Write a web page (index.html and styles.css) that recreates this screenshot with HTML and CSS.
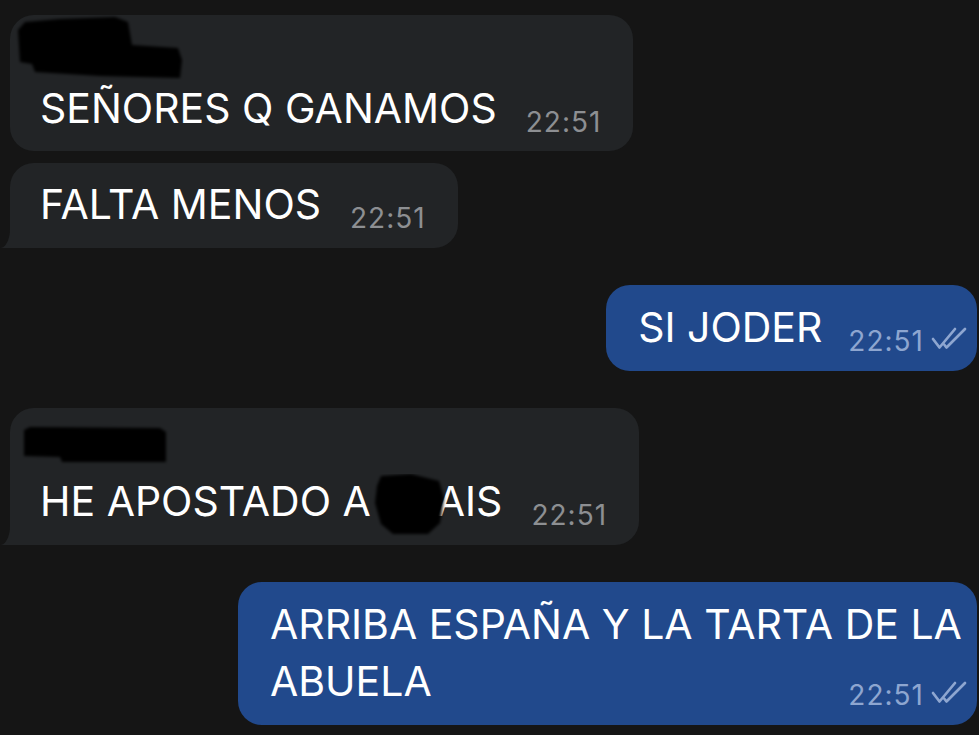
FILE: index.html
```html
<!DOCTYPE html>
<html lang="es">
<head>
    <meta charset="UTF-8">
    <meta name="viewport" content="width=device-width, initial-scale=1.0">
    <title>Chat</title>
    <link rel="stylesheet" href="styles.css">
</head>
<body>
    <svg class="defs" width="0" height="0">
        <filter id="smear" x="-20%" y="-20%" width="140%" height="140%">
            <feGaussianBlur stdDeviation="1.6"/>
        </filter>
    </svg>

    <div class="chat">
        <div class="msg in first top">
            <div class="bubble">
                <div class="sender s1">
                    <svg width="170" height="65" viewBox="0 0 170 65">
                        <polygon filter="url(#smear)" fill="#000" points="4,15 11,7 46,4 101,2 114,7 118,30 164,33 168,45 166,63 86,61 21,57 18,49 6,47"/>
                    </svg>
                </div>
                SEÑORES Q GANAMOS<span class="meta"><span class="time">22:51</span></span>
            </div>
        </div>

        <div class="msg in tail">
            <div class="bubble">
                FALTA MENOS<span class="meta"><span class="time">22:51</span></span>
            </div>
        </div>

        <div class="msg out">
            <div class="bubble">
                SI JODER<span class="meta"><span class="time">22:51</span>
                    <svg class="checks" width="38" height="25" viewBox="0 0 38 25">
                        <path d="M3 13 L9.5 21.5 L25 3 M14.5 19 L16.5 21.5 L35 3"/>
                    </svg>
                </span>
            </div>
        </div>

        <div class="msg in first tail">
            <div class="bubble">
                <div class="sender s2">
                    <svg width="154" height="46" viewBox="0 0 154 46">
                        <polygon filter="url(#smear)" fill="#000" points="6,8 12,5 142,6 148,10 148,40 44,40 42,35 6,34"/>
                    </svg>
                </div>
                HE APOSTADO A<span class="hole"><svg width="78" height="64" viewBox="0 0 78 64">
                    <polygon filter="url(#smear)" fill="#000" points="10,2 40,0 68,7 73,24 69,49 57,60 22,60 10,50 4,29 6,12"/>
                </svg></span>AIS<span class="meta"><span class="time">22:51</span></span>
            </div>
        </div>

        <div class="msg out">
            <div class="bubble wide">
                ARRIBA ESPAÑA Y LA TARTA DE LA ABUELA<span class="meta"><span class="time">22:51</span>
                    <svg class="checks" width="38" height="25" viewBox="0 0 38 25">
                        <path d="M3 13 L9.5 21.5 L25 3 M14.5 19 L16.5 21.5 L35 3"/>
                    </svg>
                </span>
            </div>
        </div>
    </div>
</body>
</html>
```

FILE: styles.css
```css
* {
    margin: 0;
    padding: 0;
    box-sizing: border-box;
}
body {
    background: #151515;
    font-family: Inter, "Noto Sans", sans-serif;
    color: #fff;
    overflow: hidden;
}
.defs {
    position: absolute;
}
.chat {
    display: flex;
    flex-direction: column;
    padding: 15px 2px 0 10px;
}
.msg {
    display: flex;
    margin-top: 37px;
}
.msg:first-child {
    margin-top: 0;
}
.msg.in + .msg.in {
    margin-top: 12px;
}
.msg.out {
    justify-content: flex-end;
}
.bubble {
    position: relative;
    font-size: 41px;
    line-height: 57px;
    padding: 13px 32px 15px 30px;
    border-radius: 24px;
    background: #222426;
}
.msg.top .bubble {
    padding-bottom: 14px;
}
.out .bubble {
    background: #21498c;
    padding: 14px 9px 15px 32px;
}
.bubble.wide {
    max-width: 739px;
}

/* tail on the bottom-left corner of incoming bubbles */
.tail .bubble {
    border-bottom-left-radius: 0;
}
.tail .bubble::before,
.tail .bubble::after {
    content: "";
    position: absolute;
    left: -10px;
    bottom: 0;
    width: 10px;
    height: 20px;
}
.tail .bubble::before {
    background: #222426;
}
.tail .bubble::after {
    background: #151515;
    border-bottom-right-radius: 10px 19px;
}

.sender {
    display: flow-root;
    height: 52px;
}
.sender svg {
    display: block;
}
.s1 svg {
    margin: -13px 0 0 -26px;
}
.s2 svg {
    margin: 1px 0 0 -22px;
}

.hole {
    display: inline-block;
    position: relative;
    width: 66px;
    height: 0;
}
.hole svg {
    position: absolute;
    left: 0;
    top: -42px;
}

.meta {
    float: right;
    display: flex;
    align-items: flex-start;
    margin: 28px 0 0 29px;
    font-size: 28px;
    line-height: 28px;
    letter-spacing: 1px;
    color: #8d8f92;
}
.out .meta {
    margin-left: 26px;
    color: #8ea6d0;
}
.checks {
    margin: -1px 0 0 6px;
    fill: none;
    stroke: #8ea6d0;
    stroke-width: 2.7;
    stroke-linecap: round;
    stroke-linejoin: round;
}
```
